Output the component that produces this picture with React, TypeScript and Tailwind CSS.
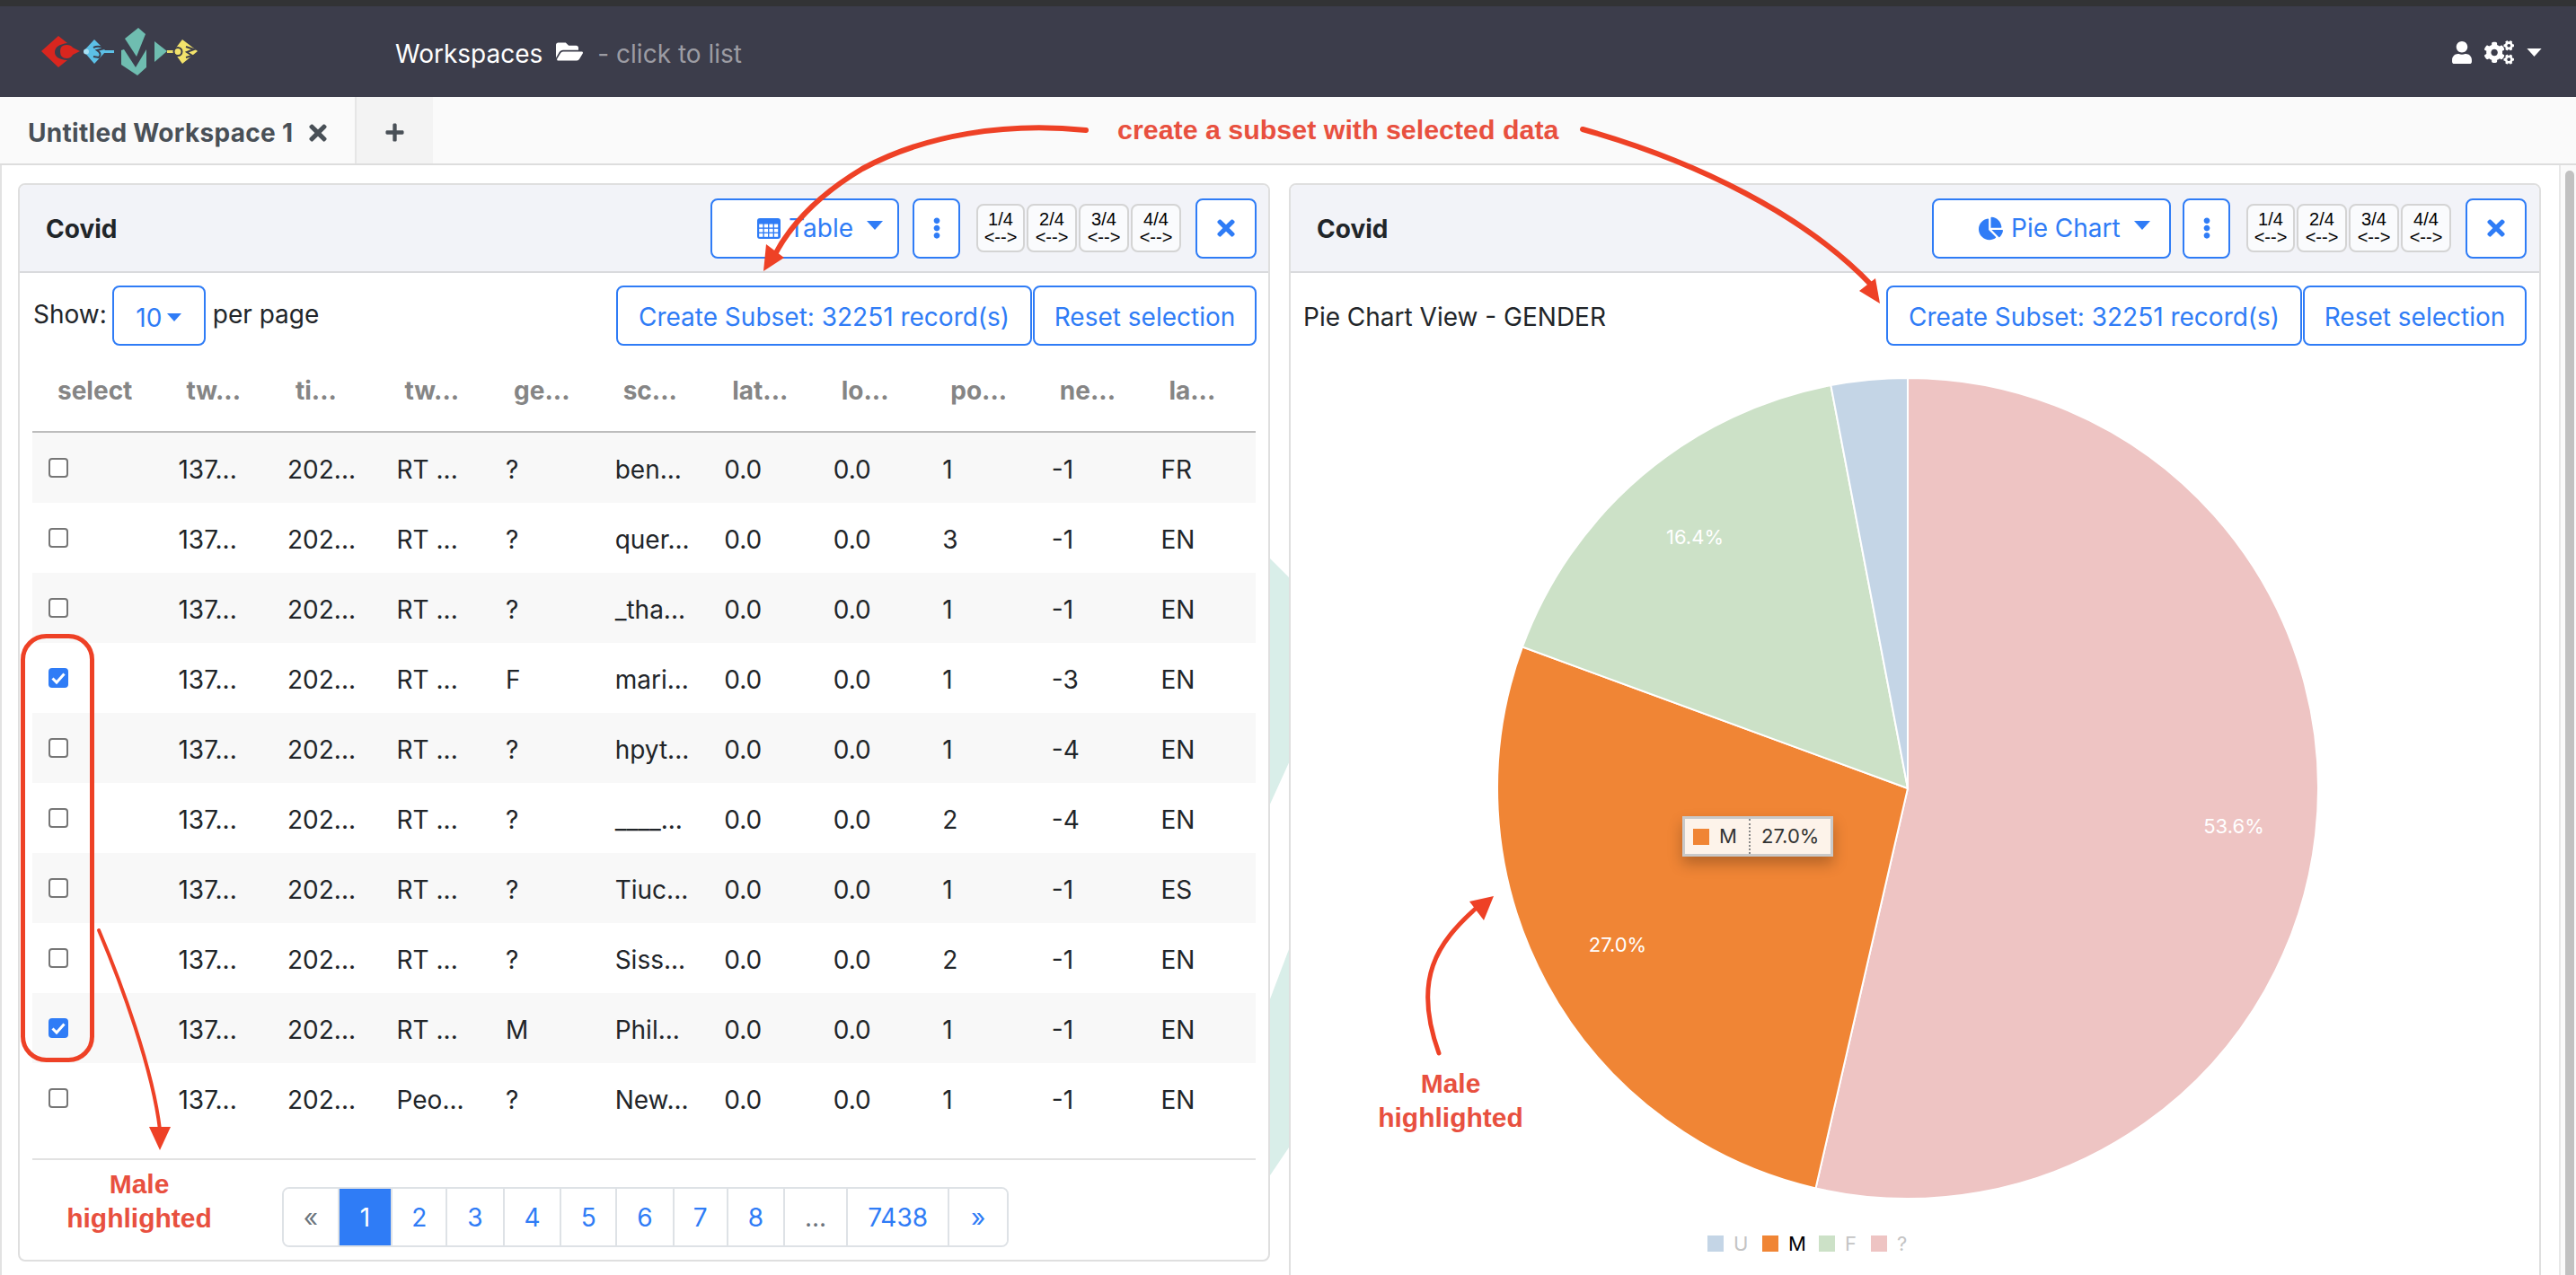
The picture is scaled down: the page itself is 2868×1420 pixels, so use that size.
import React from "react";
import { FaChartPie, FaCogs, FaEllipsisV, FaFolderOpen, FaPlus, FaTimes, FaUser } from "react-icons/fa";

const BLUE = "#2f7cf6";

function Caret({ className = "" }: { className?: string }) {
  return (
    <svg viewBox="0 0 18 10" className={className} fill="currentColor">
      <polygon points="0,0 18,0 9,10" />
    </svg>
  );
}

function TableIcon() {
  const cells: React.ReactElement[] = [];
  for (let r = 0; r < 3; r++) {
    for (let c = 0; c < 4; c++) {
      cells.push(<rect key={`${r}-${c}`} x={2.2 + c * 5.6} y={6.6 + r * 5.2} width={4.2} height={3.8} fill="#fff" />);
    }
  }
  return (
    <svg viewBox="0 0 26 23" className="h-[23px] w-[26px]">
      <rect x="0" y="0" width="26" height="23" rx="3" fill={BLUE} />
      {cells}
    </svg>
  );
}

function Logo() {
  return (
    <svg viewBox="40 26 190 62" className="h-[62px] w-[190px]">
      <path d="M46 57 L65 40 L75 48 Q61 50 61 58 Q61 66 75 67 L65 75 Z" fill="#d9261f" />
      <path d="M67 57 Q67 50 74 50 Q79 50 81 53 L89 57 L81 61 Q79 65 74 65 Q67 65 67 57 Z" fill="#d9261f" />
      <path d="M93 57 L105 44 L118 57 L105 71 Z" fill="#5cc0e6" />
      <circle cx="96" cy="57.5" r="3" fill="#a8e0f4" />
      <path d="M104 53 Q110 50 116 54 L108 56 Q114 60 110 64 L104 63" fill="none" stroke="#3c3d4b" strokeWidth="2" />
      <rect x="116" y="56" width="11" height="3" fill="#5cc0e6" />
      <polygon points="139,43 154,31 162,38 152,63" fill="#6fbdb0" />
      <polygon points="135,56 138,55 151,75 163,55 163,75 153,84 135,72" fill="#6fbdb0" />
      <polygon points="172,46 186,57 172,69" fill="#6fbdb0" />
      <rect x="186" y="56" width="7" height="3" fill="#e8dc6a" />
      <path d="M193 57 L203 44 L220 57 L203 71 Z" fill="#f3e36b" />
      <circle cx="198" cy="57.5" r="4.5" fill="none" stroke="#3c3d4b" strokeWidth="2" />
      <path d="M207 52 L216 55 L208 58 L214 62 L207 64" fill="none" stroke="#3c3d4b" strokeWidth="2" />
    </svg>
  );
}

function SizeButtons() {
  const items = [
    { t: "1/4", w: "w-[54px]" },
    { t: "2/4", w: "w-[56px]" },
    { t: "3/4", w: "w-[56px]" },
    { t: "4/4", w: "w-[56px]" },
  ];
  return (
    <div className="flex gap-[2px] font-['Liberation_Sans',sans-serif]">
      {items.map((i) => (
        <div key={i.t} className={`${i.w} flex h-[54px] flex-col items-center justify-center rounded-[8px] border-2 border-[#d4d4d4] bg-[#fafbfd] text-[20px] leading-[20px] text-black`}>
          <span>{i.t}</span>
          <span>{"<-->"}</span>
        </div>
      ))}
    </div>
  );
}

function CardHeader({ widthClass, icon, label, rightClass }: { widthClass: string; icon: React.ReactNode; label: string; rightClass: string }) {
  return (
    <div className={`flex h-[98px] items-center border-b-2 border-[#d9dadd] bg-[#f2f3f8] pl-[29px] ${rightClass}`}>
      <span className="flex-1 pt-[2px] text-[28px] font-bold text-[#212529]">Covid</span>
      <button className={`${widthClass} flex h-[67px] items-center rounded-[8px] border-2 border-[#2f7cf6] bg-white pl-[50px] text-[28px] text-[#2f7cf6]`}>
        {icon}
        <span className="ml-[9px]">{label}</span>
        <Caret className="ml-[15px] h-[10px] w-[18px] -translate-y-[3px]" />
      </button>
      <button className="ml-[15px] flex h-[67px] w-[53px] items-center justify-center rounded-[8px] border-2 border-[#2f7cf6] bg-white text-[#2f7cf6]">
        <FaEllipsisV className="h-[24px] w-[24px]" />
      </button>
      <div className="ml-[18px]">
        <SizeButtons />
      </div>
      <button className="ml-[16px] flex h-[67px] w-[68px] items-center justify-center rounded-[8px] border-2 border-[#2f7cf6] bg-white text-[#2f7cf6]">
        <FaTimes className="h-[28px] w-[22px]" />
      </button>
    </div>
  );
}

function SubsetButtons() {
  return (
    <div className="flex gap-[1px] text-[28px] text-[#2f7cf6]">
      <button className="flex h-[67px] w-[463px] items-center justify-center rounded-[8px] border-2 border-[#2f7cf6] bg-white pt-[3px]">Create Subset: 32251 record(s)</button>
      <button className="flex h-[67px] w-[249px] items-center justify-center rounded-[8px] border-2 border-[#2f7cf6] bg-white pt-[3px]">Reset selection</button>
    </div>
  );
}

const rows: { c?: boolean; d: string[] }[] = [
  { d: ["137...", "202...", "RT ...", "?", "ben...", "0.0", "0.0", "1", "-1", "FR"] },
  { d: ["137...", "202...", "RT ...", "?", "quer...", "0.0", "0.0", "3", "-1", "EN"] },
  { d: ["137...", "202...", "RT ...", "?", "_tha...", "0.0", "0.0", "1", "-1", "EN"] },
  { c: true, d: ["137...", "202...", "RT ...", "F", "mari...", "0.0", "0.0", "1", "-3", "EN"] },
  { d: ["137...", "202...", "RT ...", "?", "hpyt...", "0.0", "0.0", "1", "-4", "EN"] },
  { d: ["137...", "202...", "RT ...", "?", "____...", "0.0", "0.0", "2", "-4", "EN"] },
  { d: ["137...", "202...", "RT ...", "?", "Tiuc...", "0.0", "0.0", "1", "-1", "ES"] },
  { d: ["137...", "202...", "RT ...", "?", "Siss...", "0.0", "0.0", "2", "-1", "EN"] },
  { c: true, d: ["137...", "202...", "RT ...", "M", "Phil...", "0.0", "0.0", "1", "-1", "EN"] },
  { d: ["137...", "202...", "Peo...", "?", "New...", "0.0", "0.0", "1", "-1", "EN"] },
];

const heads = ["tw...", "ti...", "tw...", "ge...", "sc...", "lat...", "lo...", "po...", "ne...", "la..."];

function Check({ checked }: { checked?: boolean }) {
  return (
    <span className="relative flex h-[22px] w-[22px]">
      <input
        type="checkbox"
        defaultChecked={checked}
        className="h-[22px] w-[22px] appearance-none rounded-[4px] border-2 border-[#767676] bg-white checked:border-[#2f7cf6] checked:bg-[#2f7cf6]"
      />
      {checked && (
        <svg viewBox="0 0 22 22" className="pointer-events-none absolute left-0 top-0 h-[22px] w-[22px]">
          <path d="M4.5 11.5 L9 16 L17.5 6.5" fill="none" stroke="#fff" strokeWidth="3" />
        </svg>
      )}
    </span>
  );
}

function DataTable() {
  return (
    <div className="ml-[14px] w-[1362px] text-[28px]">
      <div className="flex h-[97px] items-center border-b-2 border-[#bdbdbd] pt-[4px] font-bold text-[#858585]">
        <div className="w-[163px] pl-[28px]">select</div>
        {heads.map((h, i) => (
          <div key={i} className="w-[122px] pl-[9px] last:w-[106px]">{h}</div>
        ))}
      </div>
      {rows.map((r, i) => (
        <div key={i} className={`flex h-[78px] items-center text-[#212529] ${i % 2 === 0 ? "bg-[#f8f8f8]" : "bg-white"}`}>
          <div className="flex w-[163px] pl-[18px]">
            <Check checked={r.c} />
          </div>
          {r.d.map((v, j) => (
            <div key={j} className="w-[122px] pt-[3px] last:w-[106px]">{v}</div>
          ))}
        </div>
      ))}
    </div>
  );
}

function Pagination() {
  const cells = [
    { t: "«", w: "w-[62px]", k: "muted" },
    { t: "1", w: "w-[60px]", k: "active" },
    { t: "2", w: "w-[61px]" },
    { t: "3", w: "w-[64px]" },
    { t: "4", w: "w-[64px]" },
    { t: "5", w: "w-[62px]" },
    { t: "6", w: "w-[64px]" },
    { t: "7", w: "w-[60px]" },
    { t: "8", w: "w-[64px]" },
    { t: "...", w: "w-[70px]", k: "muted" },
    { t: "7438", w: "w-[114px]" },
    { t: "»", w: "w-[64px]" },
  ];
  return (
    <div className="ml-[292px] mt-[30px] flex h-[67px] w-[809px] overflow-hidden rounded-[8px] border-2 border-[#dee2e6] text-[28px]">
      {cells.map((c, i) => (
        <div
          key={i}
          className={`${c.w} -my-[2px] flex items-center justify-center border-r-2 border-[#dee2e6] last:border-r-0 ${
            c.k === "active" ? "bg-[#2f7cf6] text-white" : c.k === "muted" ? "bg-white text-[#6c757d]" : "bg-white text-[#2f7cf6]"
          }`}
        >
          {c.t}
        </div>
      ))}
    </div>
  );
}

const CX = 687;
const CY = 478;
const R = 457;

function slicePath(fromDeg: number, toDeg: number) {
  const p = (d: number) => {
    const a = (d * Math.PI) / 180;
    return `${(CX + R * Math.sin(a)).toFixed(2)} ${(CY - R * Math.cos(a)).toFixed(2)}`;
  };
  const large = toDeg - fromDeg > 180 ? 1 : 0;
  return `M${CX} ${CY} L${p(fromDeg)} A${R} ${R} 0 ${large} 1 ${p(toDeg)} Z`;
}

function Pie() {
  const legend = [
    { x: 464, c: "#c4d5e6", t: "U", tx: 493, col: "#c4c4c4" },
    { x: 525, c: "#f08535", t: "M", tx: 554, col: "#000000" },
    { x: 588, c: "#cce1c7", t: "F", tx: 617, col: "#c4c4c4" },
    { x: 646, c: "#eec4c3", t: "?", tx: 675, col: "#c4c4c4" },
  ];
  return (
    <svg viewBox="0 0 1390 1020" className="mt-[15px] block h-[1020px] w-[1390px]">
      <path d={slicePath(0, 192.96)} fill="#eec4c3" stroke="#fff" strokeWidth="2" />
      <path d={slicePath(192.96, 290.16)} fill="#f08535" stroke="#fff" strokeWidth="2" />
      <path d={slicePath(290.16, 349.2)} fill="#cce1c7" stroke="#fff" strokeWidth="2" />
      <path d={slicePath(349.2, 360)} fill="#c4d5e6" stroke="#fff" strokeWidth="2" />
      <g fill="#fff" fontSize="22" textAnchor="middle" fontFamily="Inter, sans-serif">
        <text x="1050" y="528">53.6%</text>
        <text x="364" y="660">27.0%</text>
        <text x="450" y="206">16.4%</text>
      </g>
      <g fontSize="22" fontFamily="Inter, sans-serif">
        {legend.map((l) => (
          <g key={l.t}>
            <rect x={l.x} y={976} width="18" height="18" fill={l.c} />
            <text x={l.tx} y={993} fill={l.col}>{l.t}</text>
          </g>
        ))}
      </g>
    </svg>
  );
}

function Tooltip() {
  return (
    <div className="absolute left-[436px] top-[703px] flex h-[45px] w-[168px] items-center border-[3px] border-[#c9c9c9] bg-[#fdf3ea] text-[22px] text-[#333] shadow-[0_8px_16px_rgba(0,0,0,0.25)]">
      <span className="ml-[9px] h-[18px] w-[18px] bg-[#f08535]" />
      <span className="ml-[11px] w-[33px]">M</span>
      <span className="h-full border-l-2 border-dotted border-[#888]" />
      <span className="ml-[12px]">27.0%</span>
    </div>
  );
}

function Annotations() {
  const red = "#ee4126";
  return (
    <>
      <svg viewBox="0 0 2868 1420" className="pointer-events-none absolute left-0 top-0 z-20 h-[1420px] w-[2868px]">
        <g fill="none" stroke={red} strokeLinecap="round">
          <path d="M1209 145 C1120 136 1030 150 960 188 C 910 218 880 250 862 285" strokeWidth="6" />
          <path d="M1762 144 C1890 180 2010 240 2084 318" strokeWidth="6" />
          <rect x="25.5" y="708.5" width="77" height="472" rx="26" strokeWidth="5" />
          <path d="M110 1036 C135 1095 170 1190 178 1258" strokeWidth="4" />
          <path d="M1602 1173 C1572 1090 1600 1050 1645 1010" strokeWidth="5" />
        </g>
        <g fill={red}>
          <polygon points="850,302 853,272 873,287" />
          <polygon points="2093,338 2088,310 2070,324" />
          <polygon points="178,1281 166,1255 190,1255" />
          <polygon points="1663,998 1636,1004 1652,1025" />
        </g>
      </svg>
      <div className="absolute left-[1244px] top-[126px] z-20 whitespace-nowrap font-['Liberation_Sans',sans-serif] text-[30.4px] font-bold leading-[36px] text-[#e8503f]">
        create a subset with selected data
      </div>
      <div className="absolute left-[55px] top-[1300px] z-20 w-[200px] text-center font-['Liberation_Sans',sans-serif] text-[30px] font-bold leading-[38px] text-[#e8503f]">
        Male
        <br />
        highlighted
      </div>
      <div className="absolute left-[1515px] top-[1188px] z-20 w-[200px] text-center font-['Liberation_Sans',sans-serif] text-[30px] font-bold leading-[38px] text-[#e8503f]">
        Male
        <br />
        highlighted
      </div>
    </>
  );
}

export default function App() {
  return (
    <div className="relative h-[1420px] w-[2868px] overflow-hidden bg-white font-['Inter',sans-serif]">
      <svg viewBox="0 0 2868 1420" className="absolute left-0 top-0 h-[1420px] w-[2868px]">
        <polygon points="1412,620 1437,645 1437,845 1412,900" fill="#d9eee9" />
        <polygon points="1412,1118 1437,1052 1437,1275 1412,1312" fill="#d9eee9" />
      </svg>

      <div className="relative z-10 h-[7px] bg-[#323335]" />
      <header className="relative z-10 flex h-[101px] items-center bg-[#3c3d4b] pt-[4px] text-[28px]">
        <div className="ml-[40px] flex -translate-y-[3px] items-center">
          <Logo />
        </div>
        <span className="ml-[210px] text-white">Workspaces</span>
        <FaFolderOpen className="ml-[15px] -translate-y-[2px] h-[27px] w-[30px] text-white" />
        <span className="ml-[16px] text-[#9c9ca3]">- click to list</span>
        <div className="ml-auto mr-[38px] flex -translate-y-[1px] items-center text-white">
          <FaUser className="h-[25px] w-[22px]" />
          <FaCogs className="ml-[14px] h-[29px] w-[33px]" />
          <Caret className="ml-[14px] h-[9px] w-[17px]" />
        </div>
      </header>
      <nav className="relative z-10 flex h-[76px] border-b-2 border-[#dddddd] bg-[#fafafa] text-[28px]">
        <div className="flex w-[397px] items-center border-r-2 border-[#e6e6e6] pl-[31px] pt-[5px] font-bold tracking-[0.3px] text-[#495057]">
          <span>Untitled Workspace 1</span>
          <FaTimes className="ml-[18px] h-[28px] w-[20px]" />
        </div>
        <div className="flex w-[85px] items-center justify-center bg-[#f3f3f3] pt-[5px] text-[#495057]">
          <FaPlus className="h-[23px] w-[23px]" />
        </div>
      </nav>

      <div className="relative z-10 flex">
        <main className="flex h-[1236px] w-[2849px] items-start gap-[21px] border-l-2 border-[#e2e2e2] pl-[18px] pt-[20px]">
          <section className="w-[1394px] overflow-hidden rounded-[8px] border-2 border-[#dfdfdf] bg-white">
            <CardHeader widthClass="w-[210px]" icon={<TableIcon />} label="Table" rightClass="pr-[13px]" />
            <div className="flex pl-[15px] pr-[13px] pt-[14px]">
              <div className="flex items-start">
                <span className="mt-[11px] text-[28px] text-[#212529]">Show:</span>
                <button className="ml-[6px] flex h-[67px] w-[104px] items-center justify-center rounded-[8px] border-2 border-[#2f7cf6] pt-[4px] text-[28px] text-[#2f7cf6]">
                  10
                  <Caret className="ml-[6px] h-[9px] w-[16px]" />
                </button>
                <span className="ml-[8px] mt-[11px] text-[28px] text-[#212529]">per page</span>
              </div>
              <div className="ml-auto">
                <SubsetButtons />
              </div>
            </div>
            <DataTable />
            <div className="ml-[14px] mt-[28px] w-[1362px] border-t-2 border-[#e2e2e2]" />
            <div className="pb-[14px]">
              <Pagination />
            </div>
          </section>

          <section className="relative h-[1300px] w-[1394px] overflow-hidden rounded-[8px] border-2 border-[#dfdfdf] bg-white">
            <CardHeader widthClass="w-[266px] -mr-[2px]" icon={<FaChartPie className="h-[27px] w-[27px]" />} label="Pie Chart" rightClass="pr-[14px]" />
            <div className="flex items-center pl-[14px] pr-[14px] pt-[14px]">
              <span className="pt-[3px] text-[28px] text-[#212529]">Pie Chart View - GENDER</span>
              <div className="ml-auto">
                <SubsetButtons />
              </div>
            </div>
            <Pie />
            <Tooltip />
          </section>
        </main>
        <aside className="h-[1236px] w-[19px] border-l-2 border-[#e8e8e8] bg-[#fafafa] pl-[5px] pt-[6px]">
          <div className="h-[1300px] w-[10px] rounded-[5px] bg-[#c1c1c1]" />
        </aside>
      </div>

      <Annotations />
    </div>
  );
}
